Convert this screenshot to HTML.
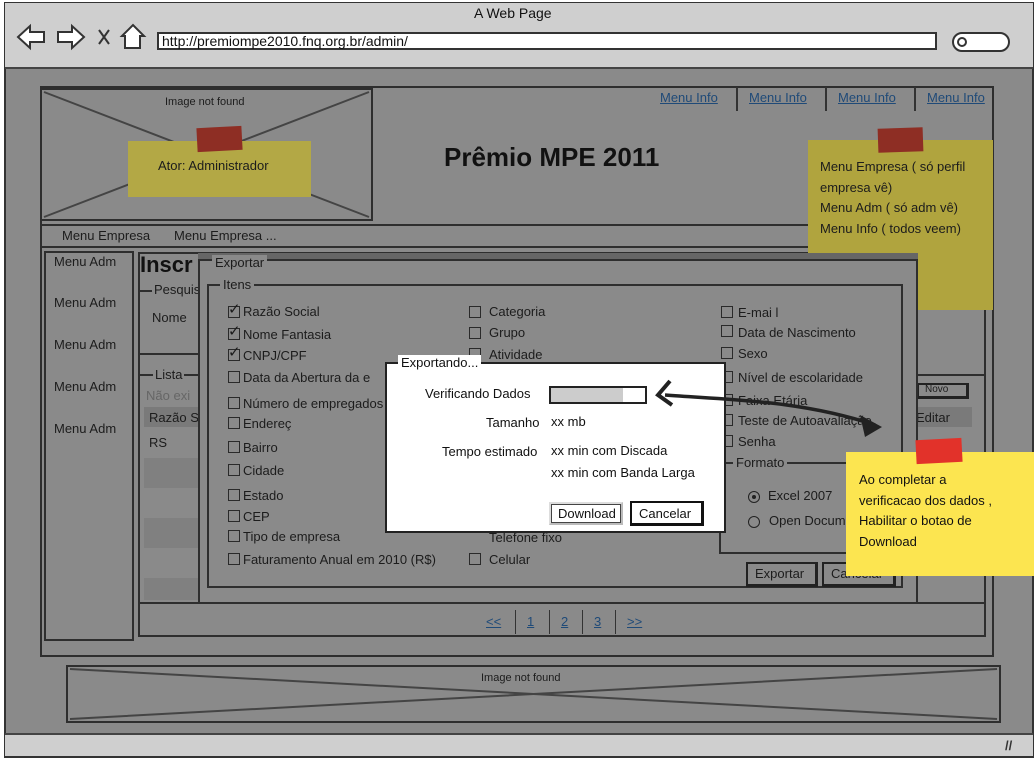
<!DOCTYPE html>
<html><head><meta charset="utf-8">
<style>
*{box-sizing:border-box;margin:0;padding:0}
body{width:1036px;height:760px;overflow:hidden;background:#fff;font-family:"Liberation Sans",sans-serif;font-size:13px;color:#1c1c1c;position:relative}
.a{position:absolute}
.t{position:absolute;white-space:nowrap}
.b{position:absolute;border:2px solid #2e2e2e}
.cb{position:absolute;width:12px;height:12px;border:1.5px solid #2a2a2a}
.lk{color:#1f4a78;text-decoration:underline}
</style></head><body>
<div class="a" style="left:4px;top:2px;width:1030px;height:756px;border:2px solid #333;background:#8a8a8a"></div>
<div class="a" style="left:5px;top:3px;width:1028px;height:66px;background:#cfcfcf;border-bottom:2px solid #444"></div>
<div class="t" style="left:474px;top:5px;font-size:14px;color:#111">A Web Page</div>
<svg class="a" style="left:14px;top:22px" width="140" height="30" viewBox="0 0 140 30">
<path d="M4 15 L16 4 L16 10 L30 10 L30 20 L16 20 L16 26 Z" fill="#fff" stroke="#333" stroke-width="2"/>
<path d="M70 15 L58 4 L58 10 L44 10 L44 20 L58 20 L58 26 Z" fill="#fff" stroke="#333" stroke-width="2"/>
<path d="M85 8 L95 22 M95 8 L85 22" stroke="#333" stroke-width="2"/>
<path d="M108 14 L119 3 L130 14 L126 14 L126 26 L111 26 L111 14 Z" fill="#fff" stroke="#333" stroke-width="2"/>
</svg>
<div class="a" style="left:157px;top:32px;width:780px;height:18px;background:#fff;border:2px solid #333"></div>
<div class="t" style="left:162px;top:33px;font-size:14px;color:#111">http://premiompe2010.fnq.org.br/admin/</div>
<div class="a" style="left:952px;top:32px;width:58px;height:20px;border:2px solid #333;border-radius:10px;background:#fff"></div>
<div class="a" style="left:957px;top:37px;width:10px;height:10px;border:2px solid #333;border-radius:50%"></div>
<div class="a" style="left:5px;top:733px;width:1028px;height:23px;background:#cfcfcf;border-top:2px solid #444"></div>
<div class="t" style="left:1005px;top:738px;font-size:13px;color:#333;font-weight:bold">//</div>

<div class="b" style="left:40px;top:86px;width:954px;height:571px"></div>
<div class="b" style="left:40px;top:88px;width:333px;height:133px"></div>
<svg class="a" style="left:40px;top:88px" width="333" height="133"><path d="M4 4 L329 129 M329 4 L4 129" stroke="#444" stroke-width="2"/></svg>
<div class="t" style="left:165px;top:96px;font-size:11px">Image not found</div>
<div class="a" style="left:128px;top:141px;width:183px;height:56px;background:#b3a845"></div>
<div class="a" style="left:197px;top:127px;width:45px;height:24px;background:#8e2e24;transform:rotate(-3deg)"></div>
<div class="t" style="left:158px;top:158px;font-size:13px">Ator: Administrador</div>
<div class="t" style="left:444px;top:142px;font-size:26px;color:#111;font-weight:bold">Prêmio MPE 2011</div>
<div class="t lk" style="left:660px;top:90px">Menu Info</div>
<div class="a" style="left:736px;top:87px;width:2px;height:24px;background:#333"></div>
<div class="t lk" style="left:749px;top:90px">Menu Info</div>
<div class="a" style="left:825px;top:87px;width:2px;height:24px;background:#333"></div>
<div class="t lk" style="left:838px;top:90px">Menu Info</div>
<div class="a" style="left:914px;top:87px;width:2px;height:24px;background:#333"></div>
<div class="t lk" style="left:927px;top:90px">Menu Info</div>
<div class="b" style="left:40px;top:224px;width:954px;height:24px"></div>
<div class="t" style="left:62px;top:228px">Menu Empresa</div>
<div class="t" style="left:174px;top:228px">Menu Empresa ...</div>
<div class="b" style="left:44px;top:251px;width:90px;height:390px"></div>
<div class="t" style="left:54px;top:254px">Menu Adm</div>
<div class="t" style="left:54px;top:295px">Menu Adm</div>
<div class="t" style="left:54px;top:337px">Menu Adm</div>
<div class="t" style="left:54px;top:379px">Menu Adm</div>
<div class="t" style="left:54px;top:421px">Menu Adm</div>
<div class="b" style="left:138px;top:252px;width:848px;height:385px"></div>
<div class="t" style="left:140px;top:252px;font-size:22px;font-weight:bold;color:#111">Inscr</div>
<div class="b" style="left:138px;top:290px;width:70px;height:65px;border-right:none"></div>
<div class="t" style="left:152px;top:282px;background:#8a8a8a;padding:0 2px">Pesquis</div>
<div class="t" style="left:152px;top:310px">Nome</div>
<div class="b" style="left:138px;top:374px;width:70px;height:230px;border-right:none"></div>
<div class="t" style="left:153px;top:367px;background:#8a8a8a;padding:0 2px">Lista</div>
<div class="t" style="left:146px;top:388px;color:#666">Não exi</div>
<div class="a" style="left:144px;top:407px;width:60px;height:20px;background:#7a7a7a"></div>
<div class="t" style="left:149px;top:410px">Razão S</div>
<div class="t" style="left:149px;top:435px">RS</div>
<div class="a" style="left:144px;top:458px;width:60px;height:30px;background:#808080"></div>
<div class="a" style="left:144px;top:518px;width:60px;height:30px;background:#808080"></div>
<div class="a" style="left:144px;top:578px;width:60px;height:22px;background:#808080"></div>
<div class="b" style="left:905px;top:374px;width:81px;height:230px;border-left:none"></div>
<div class="a" style="left:917px;top:383px;width:52px;height:16px;border:2px solid #222;border-right-width:3px;border-bottom-width:3px"></div>
<div class="t" style="left:925px;top:384px;font-size:10px">Novo</div>
<div class="a" style="left:916px;top:407px;width:56px;height:20px;background:#7a7a7a"></div>
<div class="t" style="left:916px;top:410px">Editar</div>
<div class="t lk" style="left:486px;top:614px">&lt;&lt;</div>
<div class="a" style="left:515px;top:610px;width:1px;height:24px;background:#333"></div>
<div class="t lk" style="left:527px;top:614px">1</div>
<div class="a" style="left:549px;top:610px;width:1px;height:24px;background:#333"></div>
<div class="t lk" style="left:561px;top:614px">2</div>
<div class="a" style="left:582px;top:610px;width:1px;height:24px;background:#333"></div>
<div class="t lk" style="left:594px;top:614px">3</div>
<div class="a" style="left:615px;top:610px;width:1px;height:24px;background:#333"></div>
<div class="t lk" style="left:627px;top:614px">&gt;&gt;</div>

<!-- dim sticky top right (under dialog) -->
<div class="a" style="left:808px;top:140px;width:185px;height:170px;background:#b0a43e"></div>
<div class="a" style="left:878px;top:128px;width:45px;height:24px;background:#8e2e24;transform:rotate(-2deg)"></div>
<div class="t" style="left:820px;top:157px;line-height:20.5px">Menu Empresa ( só perfil<br>empresa vê)<br>Menu Adm ( só adm vê)<br>Menu Info ( todos veem)</div>

<!-- Exportar dialog -->
<div class="a" style="left:198px;top:253px;width:720px;height:6px;background:#666"></div>
<div class="b" style="left:198px;top:259px;width:720px;height:345px;background:#8a8a8a"></div>
<div class="t" style="left:212px;top:255px;background:#8a8a8a;padding:0 3px">Exportar</div>
<div class="b" style="left:207px;top:284px;width:696px;height:304px"></div>
<div class="t" style="left:220px;top:277px;background:#8a8a8a;padding:0 3px">Itens</div>
<div class="cb" style="left:228px;top:306px"></div><div class="t" style="left:228px;top:300px;font-size:15px">✓</div><div class="t" style="left:243px;top:304px">Razão Social</div>
<div class="cb" style="left:228px;top:328px"></div><div class="t" style="left:228px;top:322px;font-size:15px">✓</div><div class="t" style="left:243px;top:327px">Nome Fantasia</div>
<div class="cb" style="left:228px;top:349px"></div><div class="t" style="left:228px;top:343px;font-size:15px">✓</div><div class="t" style="left:243px;top:348px">CNPJ/CPF</div>
<div class="cb" style="left:228px;top:371px"></div><div class="t" style="left:243px;top:370px">Data da Abertura da e</div>
<div class="cb" style="left:228px;top:397px"></div><div class="t" style="left:243px;top:396px">Número de empregados</div>
<div class="cb" style="left:228px;top:417px"></div><div class="t" style="left:243px;top:416px">Endereç</div>
<div class="cb" style="left:228px;top:441px"></div><div class="t" style="left:243px;top:440px">Bairro</div>
<div class="cb" style="left:228px;top:464px"></div><div class="t" style="left:243px;top:463px">Cidade</div>
<div class="cb" style="left:228px;top:489px"></div><div class="t" style="left:243px;top:488px">Estado</div>
<div class="cb" style="left:228px;top:510px"></div><div class="t" style="left:243px;top:509px">CEP</div>
<div class="cb" style="left:228px;top:530px"></div><div class="t" style="left:243px;top:529px">Tipo de empresa</div>
<div class="cb" style="left:228px;top:553px"></div><div class="t" style="left:243px;top:552px">Faturamento Anual em 2010 (R$)</div>
<div class="cb" style="left:469px;top:306px"></div><div class="t" style="left:489px;top:304px">Categoria</div>
<div class="cb" style="left:469px;top:327px"></div><div class="t" style="left:489px;top:325px">Grupo</div>
<div class="cb" style="left:469px;top:348px"></div><div class="t" style="left:489px;top:347px">Atividade</div>
<div class="t" style="left:489px;top:530px">Telefone fixo</div>
<div class="cb" style="left:469px;top:553px"></div><div class="t" style="left:489px;top:552px">Celular</div>
<div class="cb" style="left:721px;top:306px"></div><div class="t" style="left:738px;top:305px">E-mai l</div>
<div class="cb" style="left:721px;top:325px"></div><div class="t" style="left:738px;top:325px">Data de Nascimento</div>
<div class="cb" style="left:721px;top:347px"></div><div class="t" style="left:738px;top:346px">Sexo</div>
<div class="cb" style="left:721px;top:371px"></div><div class="t" style="left:738px;top:370px">Nível de escolaridade</div>
<div class="cb" style="left:721px;top:394px"></div><div class="t" style="left:738px;top:393px">Faixa Etária</div>
<div class="cb" style="left:721px;top:414px"></div><div class="t" style="left:738px;top:413px">Teste de Autoavaliação</div>
<div class="cb" style="left:721px;top:435px"></div><div class="t" style="left:738px;top:434px">Senha</div>
<div class="b" style="left:719px;top:462px;width:150px;height:92px"></div>
<div class="t" style="left:733px;top:455px;background:#8a8a8a;padding:0 3px">Formato</div>
<div class="a" style="left:748px;top:491px;width:12px;height:12px;border:1.5px solid #222;border-radius:50%"></div>
<div class="a" style="left:752px;top:495px;width:4px;height:4px;background:#222;border-radius:50%"></div>
<div class="t" style="left:768px;top:488px">Excel 2007</div>
<div class="a" style="left:748px;top:516px;width:12px;height:12px;border:1.5px solid #222;border-radius:50%"></div>
<div class="t" style="left:769px;top:513px">Open Docum</div>
<div class="a" style="left:746px;top:562px;width:72px;height:25px;border:2px solid #222;border-right-width:3px;border-bottom-width:3px"></div>
<div class="t" style="left:755px;top:566px">Exportar</div>
<div class="a" style="left:822px;top:562px;width:74px;height:25px;border:2px solid #222;border-right-width:3px;border-bottom-width:3px"></div>
<div class="t" style="left:831px;top:566px">Cancelar</div>

<div class="b" style="left:66px;top:665px;width:935px;height:58px"></div>
<svg class="a" style="left:66px;top:665px" width="935" height="58"><path d="M4 4 L931 54 M931 4 L4 54" stroke="#444" stroke-width="2"/></svg>
<div class="t" style="left:481px;top:672px;font-size:11px">Image not found</div>

<div class="a" style="left:385px;top:362px;width:341px;height:171px;background:#fff;border:2px solid #222"></div>
<div class="t" style="left:398px;top:355px;background:#fff;padding:0 3px;color:#111">Exportando...</div>
<div class="t" style="left:425px;top:386px;color:#111">Verificando Dados</div>
<div class="a" style="left:549px;top:386px;width:98px;height:18px;border:2px solid #222;background:#fff"></div>
<div class="a" style="left:551px;top:388px;width:72px;height:14px;background:#ccc"></div>
<div class="t" style="left:486px;top:415px;color:#111">Tamanho</div>
<div class="t" style="left:551px;top:414px;color:#111">xx mb</div>
<div class="t" style="left:442px;top:444px;color:#111">Tempo estimado</div>
<div class="t" style="left:551px;top:443px;color:#111">xx min com Discada</div>
<div class="t" style="left:551px;top:465px;color:#111">xx min com Banda Larga</div>
<div class="a" style="left:549px;top:502px;width:74px;height:23px;border:2px solid #ddd;border-right-color:#bbb;border-bottom-color:#bbb;outline:1px solid #444;outline-offset:-3px"></div>
<div class="t" style="left:558px;top:506px;color:#111">Download</div>
<div class="a" style="left:630px;top:501px;width:74px;height:25px;border:2px solid #111;border-right-width:3px;border-bottom-width:3px"></div>
<div class="t" style="left:639px;top:506px;color:#111">Cancelar</div>

<svg class="a" style="left:650px;top:375px" width="240" height="70">
<path d="M15 20 C80 25 150 25 225 50" stroke="#222" stroke-width="3.5" fill="none"/>
<path d="M20 6 L8 20 L22 30" stroke="#222" stroke-width="4" fill="none"/>
<path d="M210 40 L232 52 L215 62 Z" fill="#222"/>
</svg>

<div class="a" style="left:846px;top:452px;width:188px;height:124px;background:#fce550"></div>
<div class="a" style="left:916px;top:439px;width:46px;height:24px;background:#e2322a;transform:rotate(-3deg)"></div>
<div class="t" style="left:859px;top:470px;line-height:20.5px;color:#111">Ao completar a<br>verificacao dos dados ,<br>Habilitar o botao de<br>Download</div>
</body></html>
